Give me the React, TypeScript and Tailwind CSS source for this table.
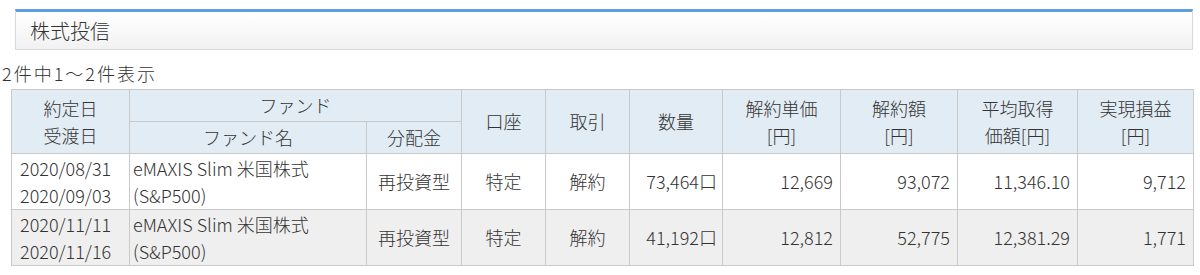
import React from "react";

const rows = [
  {
    d1: "2020/08/31",
    d2: "2020/09/03",
    bg: "bg-white",
    qty: "73,464口",
    unit: "12,669",
    amt: "93,072",
    avg: "11,346.10",
    pl: "9,712",
  },
  {
    d1: "2020/11/11",
    d2: "2020/11/16",
    bg: "bg-[#efefef]",
    qty: "41,192口",
    unit: "12,812",
    amt: "52,775",
    avg: "12,381.29",
    pl: "1,771",
  },
];

export default function App() {
  const th = "border border-[#c9c9c9] bg-[#e2ecf4] font-light text-center align-middle p-0";
  const td = "border border-[#c9c9c9] align-middle p-0";
  return (
    <div
      className="w-[1200px] h-[275px] bg-white text-[#333] font-light overflow-hidden"
      style={{ fontFamily: '"Noto Sans CJK JP", "Noto Sans", sans-serif' }}
    >
      <div className="pt-[9px] pl-[15px]">
        <div className="w-[1178px] h-[41px] border border-[#d8d8d8] border-t-[3px] border-t-[#5c9fe2] bg-gradient-to-b from-white to-[#f2f2f2] flex items-center pl-[14px]">
          <span className="text-[20px] leading-none text-[#333]">株式投信</span>
        </div>
      </div>
      <div className="pl-[2px] mt-[11px] text-[18px] leading-[24px] tracking-[2px]">2件中1～2件表示</div>
      <div className="pl-[11px] mt-[4px]">
        <table className="table-fixed border-collapse w-[1182px] text-[18px] leading-[27px]">
          <colgroup>
            <col className="w-[118px]" />
            <col className="w-[237px]" />
            <col className="w-[95px]" />
            <col className="w-[84px]" />
            <col className="w-[84px]" />
            <col className="w-[93px]" />
            <col className="w-[118px]" />
            <col className="w-[117px]" />
            <col className="w-[120px]" />
            <col className="w-[116px]" />
          </colgroup>
          <thead>
            <tr className="h-[32px]">
              <th rowSpan={2} className={th}>
                約定日
                <br />
                受渡日
              </th>
              <th colSpan={2} className={th}>
                ファンド
              </th>
              <th rowSpan={2} className={th}>
                口座
              </th>
              <th rowSpan={2} className={th}>
                取引
              </th>
              <th rowSpan={2} className={th}>
                数量
              </th>
              <th rowSpan={2} className={th}>
                解約単価
                <br />
                [円]
              </th>
              <th rowSpan={2} className={th}>
                解約額
                <br />
                [円]
              </th>
              <th rowSpan={2} className={th}>
                平均取得
                <br />
                価額[円]
              </th>
              <th rowSpan={2} className={th}>
                実現損益
                <br />
                [円]
              </th>
            </tr>
            <tr className="h-[32px]">
              <th className={th}>ファンド名</th>
              <th className={th}>分配金</th>
            </tr>
          </thead>
          <tbody>
            {rows.map((r) => (
              <tr key={r.d1} className={`h-[56px] ${r.bg}`}>
                <td className={`${td} text-left pl-[8px]`}>
                  {r.d1}
                  <br />
                  {r.d2}
                </td>
                <td className={`${td} text-left pl-[3px]`}>
                  eMAXIS Slim 米国株式
                  <br />
                  (S&amp;P500)
                </td>
                <td className={`${td} text-center`}>再投資型</td>
                <td className={`${td} text-center`}>特定</td>
                <td className={`${td} text-center`}>解約</td>
                <td className={`${td} text-right pr-[5px]`}>{r.qty}</td>
                <td className={`${td} text-right pr-[7px]`}>{r.unit}</td>
                <td className={`${td} text-right pr-[7px]`}>{r.amt}</td>
                <td className={`${td} text-right pr-[7px]`}>{r.avg}</td>
                <td className={`${td} text-right pr-[7px]`}>{r.pl}</td>
              </tr>
            ))}
          </tbody>
        </table>
      </div>
    </div>
  );
}
